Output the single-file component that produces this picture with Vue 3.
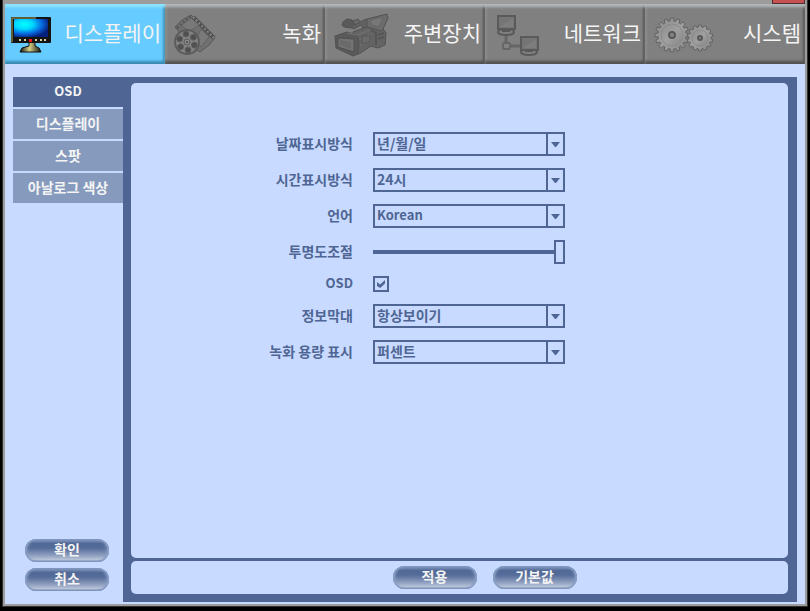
<template>
  <div class="window">
    <span class="close-strip"></span>
    <nav class="top-nav">
      <button
        v-for="menu in menus"
        :key="menu.id"
        type="button"
        class="menu"
        :class="{ active: menu.id === activeMenu }"
        @click="activeMenu = menu.id"
      >
        <svg v-if="menu.id === 'display'" class="icon" width="42" height="46" viewBox="0 0 42 46">
          <defs>
            <radialGradient id="screen" cx="0.3" cy="0.3" r="0.75">
              <stop offset="0" stop-color="#00ffff" />
              <stop offset="0.35" stop-color="#00d8ff" />
              <stop offset="0.7" stop-color="#0868e0" />
              <stop offset="1" stop-color="#04207c" />
            </radialGradient>
            <linearGradient id="stand" x1="0" x2="1">
              <stop offset="0" stop-color="#111" />
              <stop offset="0.45" stop-color="#d8d088" />
              <stop offset="1" stop-color="#111" />
            </linearGradient>
          </defs>
          <path d="M18 31h6v4l4 2 2 4H9l2-4 7-2z" fill="url(#stand)" stroke="#111008" />
          <rect x="0" y="6" width="40" height="26" rx="1" fill="#141414" />
          <path d="M1 31V7h24" fill="none" stroke="#b0a860" />
          <rect x="3" y="8" width="34" height="18" fill="url(#screen)" />
          <path d="M8 29h2M13 29h2M24 29h2M29 29h2M33 29h2" stroke="#d8d0a0" stroke-width="2" />
          <rect x="18" y="28" width="3" height="3" fill="#f01818" />
        </svg>

        <svg v-else-if="menu.id === 'record'" class="icon" width="44" height="46" viewBox="0 0 44 46">
          <path d="M2 16 9 9 18 4 42 27 36 34 27 41 20 37z" fill="#707070" stroke="#585858" />
          <path d="M20 6 41 27" stroke="#505050" stroke-width="4" />
          <path d="M20 6 41 27" stroke="#858585" stroke-width="2" stroke-dasharray="2 2" />
          <path d="M4 17 18 5" stroke="#585858" stroke-width="3" stroke-dasharray="2 2" />
          <path d="M8 15 18 7 26 14 17 20zM28 18 36 26 28 36 22 30z" fill="#797979" stroke="#626262" />
          <circle cx="14" cy="31" r="12" fill="#838383" stroke="#5c5c5c" stroke-width="2" />
          <circle
            v-for="hole in reelHoles"
            :key="hole.x"
            :cx="hole.x"
            :cy="hole.y"
            r="3"
            fill="#505050"
            stroke="#616161"
          />
          <circle cx="14" cy="31" r="3" fill="#8a8a8a" stroke="#5c5c5c" />
          <circle cx="14" cy="31" r="1" fill="#444" />
        </svg>

        <svg v-else-if="menu.id === 'device'" class="icon" width="58" height="46" viewBox="0 0 58 46">
          <g stroke="#525252" stroke-linejoin="round">
            <path d="M17 16 33 8 37 11 37 17 30 17 28 14 21 18z" fill="#626262" />
            <path d="M20 21 36 15 50 18 53 22 52 34 45 37 38 35 26 43 21 40z" fill="#646464" />
            <path d="M34 8 46 5 54 3 55 7 50 18 48 20 34 16z" fill="#6c6c6c" />
            <path d="M38 9 50 6 46 16 38 14z" fill="#777" stroke="#666" />
            <path d="M10 11 14 8 19 9 22 13 18 17 11 16 9 14z" fill="#5a5a5a" />
            <path d="M20 10 25 8 27 11 22 14z" fill="#6b6b6b" />
            <path d="M2 25 14 21 24 24 26 30 25 43 20 45 3 37z" fill="#5a5a5a" />
          </g>
          <path d="M5 27 21 28 21 41 5 36z" fill="#747474" stroke="#505050" />
          <path d="M7 29 18 31 18 38 7 34z" fill="#6a6a6a" />
          <path d="M14 22 24 24 37 19M26 29 37 24M27 34 38 29" fill="none" stroke="#737373" />
          <path d="M38 19 43 22 43 34M45 24l6-2M45 28l6-2" fill="none" stroke="#555" stroke-width="2" />
          <path d="M29 25h8v6l-8 2z" fill="#6a6a6a" stroke="#585858" />
        </svg>

        <svg v-else-if="menu.id === 'network'" class="icon" width="48" height="46" viewBox="0 0 48 46">
          <path d="M13 24v8M17 35h10" stroke="#666" stroke-width="3" />
          <rect x="10" y="32" width="7" height="6" rx="1" fill="#828282" stroke="#666" stroke-width="2" />
          <ellipse cx="13" cy="21" rx="8" ry="3" fill="#808080" stroke="#5a5a5a" stroke-width="2" />
          <path d="M9 17h8v4H9z" fill="#585858" />
          <rect x="5" y="5" width="17" height="13" fill="#757575" stroke="#5a5a5a" stroke-width="2" />
          <path d="M7 16 20 7v9z" fill="#7d7d7d" />
          <ellipse cx="36" cy="41" rx="8" ry="3" fill="#808080" stroke="#5a5a5a" stroke-width="2" />
          <path d="M32 38h8v3h-8z" fill="#585858" />
          <rect x="28" y="26" width="17" height="13" fill="#757575" stroke="#5a5a5a" stroke-width="2" />
          <path d="M30 37 43 28v9z" fill="#7d7d7d" />
        </svg>

        <svg v-else class="icon" width="64" height="46" viewBox="0 0 64 46">
          <defs>
            <linearGradient id="gear" x1="0" y1="0" x2="1" y2="1">
              <stop offset="0" stop-color="#8c8c8c" />
              <stop offset="0.5" stop-color="#a0a0a0" />
              <stop offset="1" stop-color="#858585" />
            </linearGradient>
          </defs>
          <g fill="url(#gear)" stroke="#626262">
            <path :d="gearPath(19, 24, 17, 14, 16)" />
            <circle cx="19" cy="24" r="11" stroke="#8a8a8a" />
            <path :d="gearPath(47, 27, 13, 11, 14)" />
            <circle cx="47" cy="27" r="8" stroke="#8a8a8a" />
          </g>
          <circle cx="19" cy="24" r="3" fill="#858585" stroke="#585858" stroke-width="2" />
          <circle cx="47" cy="27" r="2" fill="#858585" stroke="#585858" stroke-width="2" />
        </svg>
        <span>{{ menu.label }}</span>
      </button>
    </nav>

    <div class="content">
      <aside class="sidebar">
        <button
          v-for="tab in tabs"
          :key="tab"
          type="button"
          class="tab"
          :class="{ active: tab === activeTab, latin: tab === 'OSD' }"
          @click="activeTab = tab"
        >
          {{ tab }}
        </button>
        <div class="sidebar-actions">
          <button type="button" class="pill">확인</button>
          <button type="button" class="pill">취소</button>
        </div>
      </aside>

      <main class="frame">
        <form id="settings" class="panel" @submit.prevent>
          <template v-for="field in fields" :key="field.id">
            <label :for="field.id" :class="{ latin: field.label === 'OSD' }">{{ field.label }}</label>
            <input
              v-if="field.type === 'range'"
              :id="field.id"
              v-model="field.value"
              type="range"
              min="0"
              max="100"
            />
            <input
              v-else-if="field.type === 'checkbox'"
              :id="field.id"
              v-model="field.value"
              type="checkbox"
            />
            <div v-else class="select-box">
              <select :id="field.id" v-model="field.value" :class="{ latin: field.value === 'Korean' }">
                <option v-for="option in field.options" :key="option">{{ option }}</option>
              </select>
              <span class="arrow">
                <svg width="9" height="5" viewBox="0 0 9 5"><path d="M0 0h9L5 5H4z" fill="#4f6694" /></svg>
              </span>
            </div>
          </template>
        </form>
        <div class="actions">
          <button type="submit" form="settings" class="pill">적용</button>
          <button type="button" class="pill">기본값</button>
        </div>
      </main>
    </div>
  </div>
</template>

<script setup>
import { ref } from 'vue';

const menus = [
  { id: 'display', label: '디스플레이' },
  { id: 'record', label: '녹화' },
  { id: 'device', label: '주변장치' },
  { id: 'network', label: '네트워크' },
  { id: 'system', label: '시스템' }
];
const tabs = ['OSD', '디스플레이', '스팟', '아날로그 색상'];

const activeMenu = ref('display');
const activeTab = ref('OSD');

const fields = ref([
  { id: 'date', label: '날짜표시방식', value: '년/월/일', options: ['년/월/일'] },
  { id: 'time', label: '시간표시방식', value: '24시', options: ['24시'] },
  { id: 'language', label: '언어', value: 'Korean', options: ['Korean'] },
  { id: 'opacity', label: '투명도조절', type: 'range', value: 100 },
  { id: 'osd', label: 'OSD', type: 'checkbox', value: true },
  { id: 'infobar', label: '정보막대', value: '항상보이기', options: ['항상보이기'] },
  { id: 'capacity', label: '녹화 용량 표시', value: '퍼센트', options: ['퍼센트'] }
]);

const reelHoles = Array.from({ length: 6 }, (_, i) => ({
  x: 14 + 8 * Math.cos((i * Math.PI) / 3 + 0.4),
  y: 31 + 8 * Math.sin((i * Math.PI) / 3 + 0.4)
}));

// Four points per tooth: two on the outer radius, two on the inner one
const gearPath = (cx, cy, outer, inner, teeth) => {
  const points = [];
  for (let i = 0; i < teeth; i++) {
    [[-0.34, inner], [-0.24, outer], [0.24, outer], [0.34, inner]].forEach(([shift, r]) => {
      const angle = ((i + shift) * 2 * Math.PI) / teeth;
      points.push(`${(cx + r * Math.sin(angle)).toFixed(1)} ${(cy - r * Math.cos(angle)).toFixed(1)}`);
    });
  }
  return `M${points.join('L')}Z`;
};
</script>

<style>
body {
  margin: 0;
  background: #000000;
}
</style>

<style scoped>
.window {
  display: flex;
  flex-direction: column;
  position: relative;
  box-sizing: border-box;
  min-height: calc(100vh - 5px);
  margin: 0 3px 5px;
  padding: 4px 2px 2px;
  background: #9c9c9c;
  box-shadow: 0 0 0 1px #303030;
  font-family: "Noto Sans CJK KR", sans-serif;
  font-size: 14px;
  font-weight: bold;
  color: #4f6694;
}

.close-strip {
  position: absolute;
  top: 0;
  right: 2px;
  width: 31px;
  height: 3px;
  border: 1px solid #4c3030;
  border-top: none;
  background: #c75050;
}

button,
select {
  font: inherit;
  color: inherit;
  border: none;
  cursor: pointer;
}

.top-nav {
  display: flex;
  height: 60px;
}

.menu {
  display: flex;
  align-items: center;
  justify-content: space-between;
  flex: 0 0 20%;
  padding: 0 4px 0 8px;
  background: #808080;
  box-shadow: inset 0 4px 3px -1px #b4b8ba, inset 0 -4px 3px -1px #505050,
    inset 2px 0 2px #8c8c8c, inset -3px 0 2px -1px #555555;
  color: #f4f4f4;
  font-size: 21px;
  font-weight: normal;
  line-height: 30px;
  white-space: nowrap;
}

.menu span {
  padding-bottom: 4px;
}

.menu.active {
  padding-left: 6px;
  background: #66ccff;
  box-shadow: inset 0 4px 3px -1px #90e4ff, inset 0 -4px 3px -1px #3888b0,
    inset -3px 0 2px -1px #4090b8;
}

.icon {
  flex: none;
}

.content {
  display: flex;
  flex: 1;
  padding: 13px 8px 2px;
  background: #c8daff;
}

.sidebar {
  display: flex;
  flex-direction: column;
  gap: 2px;
  width: 110px;
}

.tab {
  height: 30px;
  padding: 0 0 2px;
  background: #859abd;
  color: #f4f4f4;
  line-height: 20px;
}

.tab.active {
  background: #4f6694;
}

.latin,
select.latin {
  font-size: 13px;
}

.sidebar-actions {
  display: flex;
  flex-direction: column;
  align-items: center;
  gap: 6px;
  margin-top: auto;
  padding: 0 2px 11px 0;
}

.pill {
  width: 84px;
  height: 23px;
  padding: 0 0 3px;
  border-radius: 12px;
  background: linear-gradient(#8fa4c8, #506896 20%, #566d9a 40%, #8c9cbd 70%, #b8c4d8 90%, #7083aa);
  box-shadow: inset 3px 0 3px -1px #8ca2c8, inset -3px 0 3px -1px #8ca2c8,
    inset 0 0 1px 1px #7d91b8;
  color: #f4f4f4;
  line-height: 20px;
}

.frame {
  display: flex;
  flex: 1;
  flex-direction: column;
  gap: 3px;
  padding: 6px 9px 8px 8px;
  background: #4f6694;
}

.panel {
  display: grid;
  flex: 1;
  grid-template-columns: 222px 192px;
  align-content: start;
  align-items: center;
  gap: 12px 20px;
  padding-top: 49px;
  border-radius: 5px;
  background: #c8daff;
}

label {
  padding-bottom: 2px;
  line-height: 14px;
  text-align: right;
}

.select-box {
  display: grid;
  grid-template-columns: 1fr 17px;
  height: 20px;
  border: 2px solid #4f6694;
}

select {
  grid-area: 1 / 1 / 2 / 3;
  width: 100%;
  height: 20px;
  padding: 0 18px 2px 2px;
  appearance: none;
  background: transparent;
  line-height: 18px;
}

.arrow {
  display: flex;
  grid-area: 1 / 2;
  align-items: center;
  justify-content: center;
  padding-right: 1px;
  border-left: 2px solid #4f6694;
  pointer-events: none;
}

input {
  margin: 0;
  appearance: none;
  background: transparent;
}

input[type="range"] {
  width: 100%;
  height: 24px;
}

input[type="range"]::-webkit-slider-runnable-track {
  height: 4px;
  background: #4f6694;
}

input[type="range"]::-webkit-slider-thumb {
  box-sizing: border-box;
  width: 11px;
  height: 24px;
  margin-top: -10px;
  appearance: none;
  border: 2px solid #4f6694;
  background: #c8daff;
}

input[type="checkbox"] {
  display: grid;
  place-items: center;
  box-sizing: border-box;
  width: 16px;
  height: 16px;
  border: 2px solid #4f6694;
}

input[type="checkbox"]:checked::after {
  content: "";
  width: 8px;
  height: 8px;
  background: #4f6694;
  clip-path: polygon(0 25%, 38% 55%, 100% 0, 100% 45%, 40% 100%, 0 75%);
}

.actions {
  display: flex;
  align-items: center;
  justify-content: center;
  gap: 16px;
  height: 33px;
  padding-left: 50px;
  border-radius: 5px;
  background: #c8daff;
}
</style>
